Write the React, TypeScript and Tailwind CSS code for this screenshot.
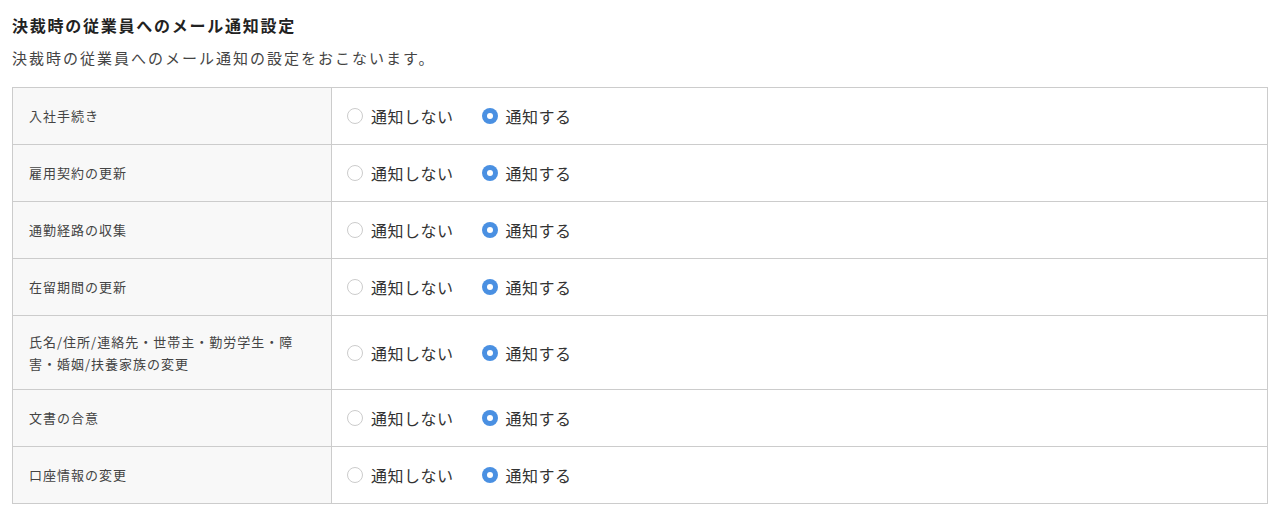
const rows = [
  "入社手続き",
  "雇用契約の更新",
  "通勤経路の収集",
  "在留期間の更新",
  "氏名/住所/連絡先・世帯主・勤労学生・障害・婚姻/扶養家族の変更",
  "文書の合意",
  "口座情報の変更",
];

function Radio({ checked, label }: { checked: boolean; label: string }) {
  return (
    <label className="flex items-center gap-2 cursor-pointer">
      {checked ? (
        <span className="flex h-4 w-4 items-center justify-center rounded-full bg-[#4a90e2]">
          <span className="h-[6px] w-[6px] rounded-full bg-white" />
        </span>
      ) : (
        <span className="h-4 w-4 rounded-full border border-[#cccccc] bg-white" />
      )}
      <span className="text-base tracking-[0.5px] text-[#333]">{label}</span>
    </label>
  );
}

export default function App() {
  return (
    <div
      className="min-h-[516px] bg-white px-3 pt-[13px] text-[#333]"
      style={{ fontFamily: '"Noto Sans CJK JP", "Noto Sans", sans-serif' }}
    >
      <h2 className="text-[16px] font-bold leading-6 tracking-[1.75px] text-[#222]">
        決裁時の従業員へのメール通知設定
      </h2>
      <p className="mt-[9px] text-[15px] leading-6 tracking-[2px] text-[#444]">
        決裁時の従業員へのメール通知の設定をおこないます。
      </p>
      <div className="mt-[17px] w-[1256px] border border-[#cccccc]">
        {rows.map((label, i) => (
          <div
            key={label}
            className={`flex ${i > 0 ? "border-t border-[#cccccc]" : ""} ${
              label.length > 20 ? "min-h-[74px]" : i > 0 ? "min-h-[57px]" : "min-h-[56px]"
            }`}
          >
            <div className="flex w-[319px] shrink-0 items-center border-r border-[#cccccc] bg-[#f8f8f8] pl-4 pr-5 text-[13px] leading-[22px] tracking-[1px] text-[#444]">
              {label}
            </div>
            <div className="flex items-center gap-7 pl-[15px]">
              <Radio checked={false} label="通知しない" />
              <Radio checked label="通知する" />
            </div>
          </div>
        ))}
      </div>
    </div>
  );
}
